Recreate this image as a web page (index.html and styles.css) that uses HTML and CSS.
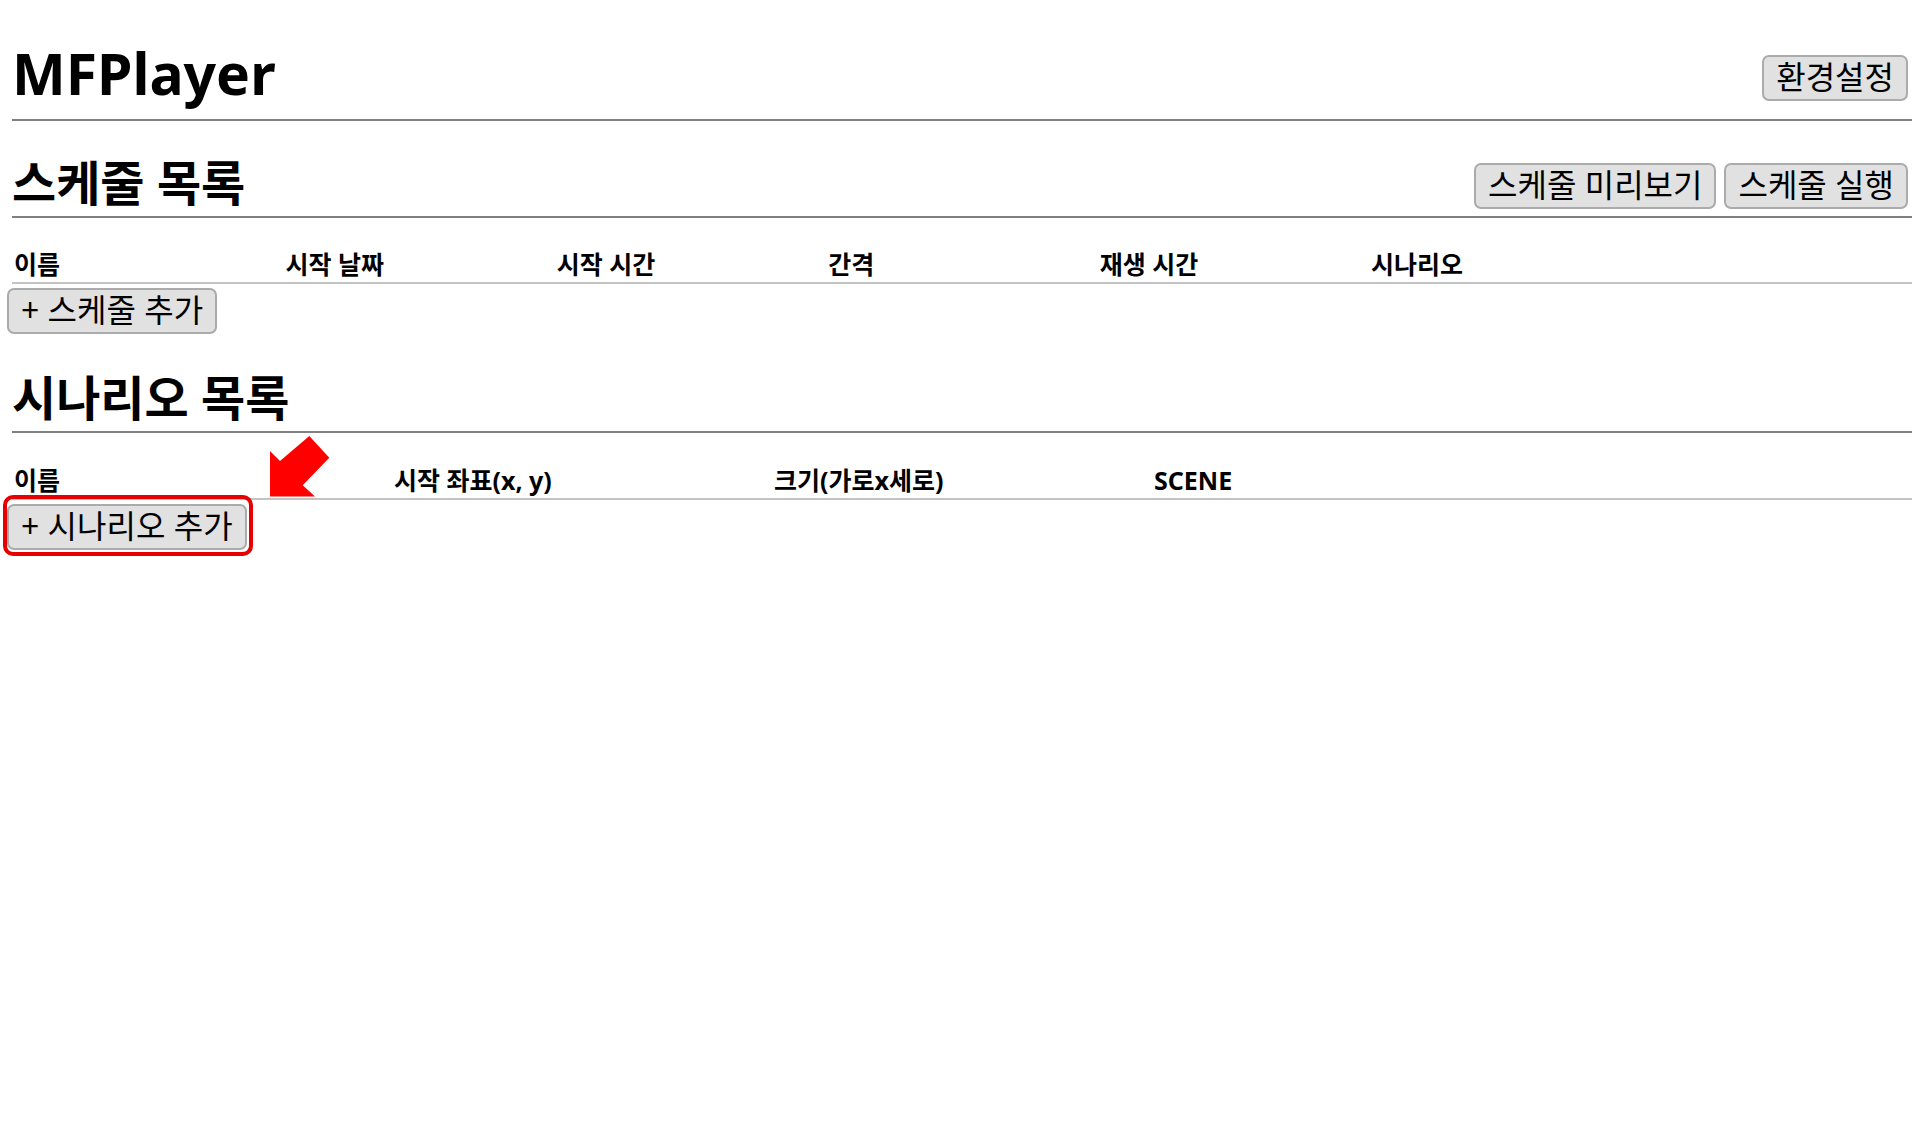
FILE: index.html
```html
<!DOCTYPE html>
<html lang="ko">
<head>
<meta charset="utf-8">
<title>MFPlayer</title>
<link rel="stylesheet" href="styles.css">
</head>
<body>
<div class="page">
  <header class="topbar">
    <h1 class="title">MFPlayer</h1>
    <button class="btn">환경설정</button>
  </header>

  <section class="section">
    <div class="section-head">
      <h2 class="section-title">스케줄 목록</h2>
      <div class="actions">
        <button class="btn">스케줄 미리보기</button>
        <button class="btn">스케줄 실행</button>
      </div>
    </div>
    <table class="list list-schedule">
      <thead>
        <tr>
          <th>이름</th>
          <th>시작 날짜</th>
          <th>시작 시간</th>
          <th>간격</th>
          <th>재생 시간</th>
          <th>시나리오</th>
          <th></th>
        </tr>
      </thead>
      <tbody></tbody>
    </table>
    <div class="add-row">
      <button class="btn">+ 스케줄 추가</button>
    </div>
  </section>

  <section class="section section-scenario">
    <div class="section-head">
      <h2 class="section-title">시나리오 목록</h2>
    </div>
    <table class="list list-scenario">
      <thead>
        <tr>
          <th>이름</th>
          <th>시작 좌표(x, y)</th>
          <th>크기(가로x세로)</th>
          <th>SCENE</th>
          <th></th>
        </tr>
      </thead>
      <tbody></tbody>
    </table>
    <div class="add-row highlight-wrap">
      <button class="btn">+ 시나리오 추가</button>
      <span class="highlight-box"></span>
    </div>
    <svg class="pointer-arrow" width="60" height="61" viewBox="0 0 60 61" aria-hidden="true">
      <polygon points="0,15 10,25 39.3,0 59.3,21.7 32.7,49.3 45,60.5 0,60.5" fill="#ff0000"/>
    </svg>
  </section>
</div>
</body>
</html>
```

FILE: styles.css
```css
* {
  box-sizing: border-box;
}

html, body {
  margin: 0;
  padding: 0;
  background: #ffffff;
}

body {
  font-family: "Noto Sans", "Noto Sans CJK KR", sans-serif;
  color: #000000;
  min-height: 1125px;
}

.page {
  padding: 0 10px 60px 7px;
}

.topbar {
  display: flex;
  justify-content: space-between;
  align-items: flex-end;
  margin-left: 5px;
  padding: 45px 4px 18px 0;
  border-bottom: 2px solid #808080;
}

.title {
  margin: 0;
  font-size: 57px;
  line-height: 56px;
  font-weight: 700;
}

.section-head {
  display: flex;
  justify-content: space-between;
  align-items: flex-end;
  margin-left: 5px;
  padding: 38px 4px 7px 0;
  border-bottom: 2px solid #808080;
}

.section-title {
  margin: 0 0 2px 0;
  font-size: 48px;
  line-height: 48px;
  font-weight: 700;
}

.actions {
  display: flex;
  gap: 8px;
}

.btn {
  font-family: "Noto Sans", "Noto Sans CJK KR", sans-serif;
  font-size: 32px;
  line-height: 40px;
  color: #000000;
  background: #e1e1e1;
  border: 2px solid #ababab;
  border-radius: 7px;
  padding: 0 12px 2px;
  margin: 0;
  cursor: pointer;
  white-space: nowrap;
}

.list {
  margin: 26px 0 0 5px;
  width: calc(100% - 5px);
  border-collapse: collapse;
  table-layout: fixed;
}

.list th {
  text-align: left;
  font-size: 25px;
  line-height: 33px;
  font-weight: 700;
  padding: 4px 2px 1px;
  border-bottom: 2px solid #c3c3c3;
  white-space: nowrap;
}

.add-row {
  display: flex;
  margin-top: 4px;
}

.section-scenario {
  position: relative;
  margin-top: 2px;
}

.section-scenario .list {
  margin-top: 27px;
}

.highlight-wrap {
  position: relative;
  width: fit-content;
}

.highlight-box {
  position: absolute;
  left: -4px;
  right: -6px;
  top: -9px;
  bottom: -6px;
  border: 4px solid #e60000;
  border-radius: 10px;
  pointer-events: none;
}

.pointer-arrow {
  position: absolute;
  left: 263px;
  top: 100px;
  display: block;
}
```
